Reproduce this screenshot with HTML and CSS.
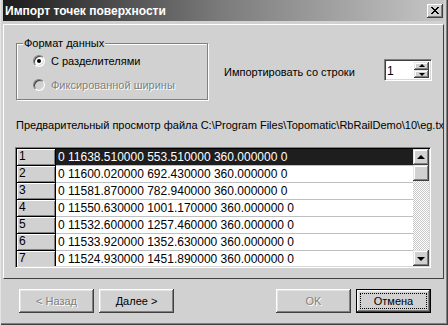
FILE: index.html
```html
<!DOCTYPE html>
<html lang="ru">
  <head>
    <meta charset="UTF-8" />
    <title>Импорт точек поверхности</title>
    <link rel="stylesheet" href="styles.css">
  </head>
  <body>
    <div class="window">
      <div class="titlebar">
        <span class="title">Импорт точек поверхности</span>
        <span class="close-btn">
          <svg width="8" height="7" viewBox="0 0 8 7" shape-rendering="crispEdges">
            <path d="M0 0h2v1h-2zM6 0h2v1h-2zM1 1h2v1h-2zM5 1h2v1h-2zM2 2h4v1h-4zM3 3h2v1h-2zM2 4h4v1h-4zM1 5h2v1h-2zM5 5h2v1h-2zM0 6h2v1h-2zM6 6h2v1h-2z" fill="#000"/>
          </svg>
        </span>
      </div>

      <div class="panel">
        <div class="top-row">
          <fieldset class="group">
            <legend>Формат данных</legend>
            <label class="radio-line">
              <span class="radio checked"></span>
              <span>С разделителями</span>
            </label>
            <label class="radio-line disabled">
              <span class="radio"></span>
              <span>Фиксированной ширины</span>
            </label>
          </fieldset>

          <div class="start-row">
            <span class="start-label">Импортировать со строки</span>
            <div class="spin">
              <span class="spin-value">1</span>
              <div class="spin-buttons">
                <span class="spin-btn"><i class="arrow-up"></i></span>
                <span class="spin-btn"><i class="arrow-down"></i></span>
              </div>
            </div>
          </div>
        </div>

        <div class="preview-label">Предварительный просмотр файла C:\Program Files\Topomatic\RbRailDemo\10\eg.txt</div>

        <div class="grid">
          <div class="rows">
            <div class="row selected"><span class="fixed">1</span><span class="cell">0 11638.510000 553.510000 360.000000 0</span></div>
            <div class="row"><span class="fixed">2</span><span class="cell">0 11600.020000 692.430000 360.000000 0</span></div>
            <div class="row"><span class="fixed">3</span><span class="cell">0 11581.870000 782.940000 360.000000 0</span></div>
            <div class="row"><span class="fixed">4</span><span class="cell">0 11550.630000 1001.170000 360.000000 0</span></div>
            <div class="row"><span class="fixed">5</span><span class="cell">0 11532.600000 1257.460000 360.000000 0</span></div>
            <div class="row"><span class="fixed">6</span><span class="cell">0 11533.920000 1352.630000 360.000000 0</span></div>
            <div class="row"><span class="fixed">7</span><span class="cell">0 11524.930000 1451.890000 360.000000 0</span></div>
          </div>
          <div class="scrollbar">
            <span class="sb-btn"><i class="arrow-up"></i></span>
            <span class="sb-thumb"></span>
            <span class="sb-track"></span>
            <span class="sb-btn"><i class="arrow-down"></i></span>
          </div>
        </div>
      </div>

      <div class="footer">
        <button class="btn" disabled>&lt; Назад</button>
        <button class="btn">Далее &gt;</button>
        <span class="spacer"></span>
        <button class="btn" disabled>OK</button>
        <button class="btn default"><span class="focus">Отмена</span></button>
      </div>
    </div>
  </body>
</html>
```

FILE: styles.css
```css
/* Общие */
body {
  margin: 0;
  font-family: "Liberation Sans", Arial, sans-serif;
  font-size: 11px;
  color: #000;
  background: #d1d1d1;
}

/* Окно */
.window {
  width: 448px;
  height: 325px;
  box-sizing: border-box;
  padding: 0 4px 4px 3px;
  background: #d1d1d1;
  box-shadow: inset 1px 0 #e4e4e4, inset -1px -1px #404040, inset -2px -2px #808080;
  display: flex;
  flex-direction: column;
  overflow: hidden;
}

/* Заголовок */
.titlebar {
  height: 21px;
  flex: none;
  background: linear-gradient(to right, #1c1c1c, #7c7c7c 50%, #c6c6c6);
  display: flex;
  align-items: center;
  padding: 0 1px 0 2px;
}

.title {
  color: #fff;
  font-weight: bold;
  font-size: 12px;
  flex: 1;
}

.close-btn {
  width: 16px;
  height: 14px;
  box-sizing: border-box;
  background: #d1d1d1;
  box-shadow: inset -1px -1px #404040, inset 1px 1px #fff, inset -2px -2px #808080;
  display: flex;
  align-items: center;
  justify-content: center;
  padding-right: 1px;
}

/* Панель */
.panel {
  margin-top: 3px;
  height: 255px;
  flex: none;
  box-sizing: border-box;
  border: 1px solid;
  border-color: #fff #404040 #404040 #fff;
  overflow: hidden;
}

.top-row {
  display: flex;
  margin: 12px 0 0 12px;
}

/* Группа */
.group {
  width: 192px;
  height: 63px;
  box-sizing: border-box;
  margin: 0;
  padding: 5px 0 0 0;
  border: 1px solid #808080;
  box-shadow: 1px 1px 0 #fff, inset 1px 1px 0 #fff;
}

.group legend {
  margin-left: 6px;
  padding: 0 1px;
  background: #d1d1d1;
  line-height: 13px;
}

.radio-line {
  display: flex;
  align-items: center;
  gap: 6px;
  height: 12px;
  margin: 0 0 12px 16px;
}

.radio-line.disabled {
  color: #808080;
  text-shadow: 1px 1px 0 #fff;
}

.radio {
  width: 12px;
  height: 12px;
  box-sizing: border-box;
  border-radius: 50%;
  border: 1px solid;
  border-color: #808080 #fff #fff #808080;
  background: #fff;
  box-shadow: inset 1px 1px 0 #404040, inset -1px -1px 0 #d8d8d8;
  display: flex;
  align-items: center;
  justify-content: center;
}

.radio-line.disabled .radio {
  background: #d1d1d1;
}

.radio.checked::after {
  content: "";
  width: 4px;
  height: 4px;
  border-radius: 50%;
  background: #000;
}

/* Номер строки */
.start-row {
  flex: 1;
  display: flex;
  align-items: center;
  margin-top: 22px;
  height: 22px;
  padding-left: 16px;
  padding-right: 11px;
}

.start-label {
  flex: 1;
  padding-top: 4px;
}

.spin {
  width: 48px;
  height: 22px;
  box-sizing: border-box;
  border: 1px solid;
  border-color: #808080 #fff #fff #808080;
  box-shadow: inset 1px 1px #404040, inset -1px -1px #d8d8d8;
  background: #fff;
  display: flex;
  padding: 2px;
  font-size: 12px;
}

.spin-value {
  flex: 1;
  line-height: 18px;
}

.spin-buttons {
  width: 15px;
  display: flex;
  flex-direction: column;
}

.spin-btn,
.sb-btn,
.sb-thumb {
  background: #d1d1d1;
  box-shadow: inset -1px -1px #404040, inset 1px 1px #e4e4e4, inset -2px -2px #808080, inset 2px 2px #fff;
  display: flex;
  align-items: center;
  justify-content: center;
}

.spin-btn {
  height: 9px;
}

.arrow-up,
.arrow-down {
  width: 0;
  height: 0;
  border-left: 3px solid transparent;
  border-right: 3px solid transparent;
}

.arrow-up {
  border-bottom: 3px solid #000;
  margin-bottom: 1px;
}

.arrow-down {
  border-top: 3px solid #000;
  margin-top: 1px;
}

.sb-btn .arrow-up,
.sb-btn .arrow-down {
  border-left-width: 4px;
  border-right-width: 4px;
  border-bottom-width: 4px;
  border-top-width: 4px;
}

.sb-btn .arrow-up {
  border-top: 0;
}

.sb-btn .arrow-down {
  border-bottom: 0;
}

.preview-label {
  margin: 18px 0 0 12px;
  line-height: 14px;
  white-space: nowrap;
}

/* Таблица */
.grid {
  margin: 15px 0 0 11px;
  width: 416px;
  height: 121px;
  box-sizing: border-box;
  border: 1px solid;
  border-color: #808080 #fff #fff #808080;
  box-shadow: inset 1px 1px #000, inset -1px -1px #d8d8d8;
  padding: 1px;
  display: flex;
  background: #fff;
  font-size: 12px;
}

.rows {
  flex: 1;
  overflow: hidden;
}

.row {
  display: flex;
  height: 17px;
}

.fixed {
  width: 39px;
  flex: none;
  box-sizing: border-box;
  padding-left: 2px;
  line-height: 15px;
  background: #d1d1d1;
  border-right: 1px solid #000;
  border-bottom: 1px solid #000;
  box-shadow: inset 1px 1px #fff, inset -1px -1px #808080;
}

.cell {
  flex: 1;
  box-sizing: border-box;
  padding-left: 2px;
  line-height: 16px;
  border-bottom: 1px solid #c0c0c0;
  white-space: nowrap;
  overflow: hidden;
}

.row.selected .cell {
  background: #1e1e1e;
  color: #fff;
}

.scrollbar {
  width: 16px;
  flex: none;
  display: flex;
  flex-direction: column;
}

.sb-btn,
.sb-thumb {
  height: 16px;
  flex: none;
}

.sb-track {
  flex: 1;
  background: repeating-conic-gradient(#fff 0 25%, #c8c8c8 0 50%) 0 0 / 2px 2px;
}

/* Кнопки */
.footer {
  flex: 1;
  display: flex;
  align-items: flex-start;
  gap: 5px;
  padding: 10px 13px 0 16px;
}

.spacer {
  flex: 1;
}

.btn {
  width: 75px;
  height: 24px;
  box-sizing: border-box;
  font: inherit;
  color: #000;
  background: #d1d1d1;
  border: none;
  padding: 0;
  box-shadow: inset -1px -1px #404040, inset 1px 1px #fff, inset -2px -2px #808080, inset 2px 2px #e4e4e4;
  display: flex;
  align-items: center;
  justify-content: center;
}

.btn:disabled {
  color: #808080;
  text-shadow: 1px 1px 0 #fff;
}

.btn.default {
  border: 1px solid #000;
  padding: 3px;
}

.focus {
  flex: 1;
  align-self: stretch;
  border: 1px dotted #000;
  display: flex;
  align-items: center;
  justify-content: center;
}
```
